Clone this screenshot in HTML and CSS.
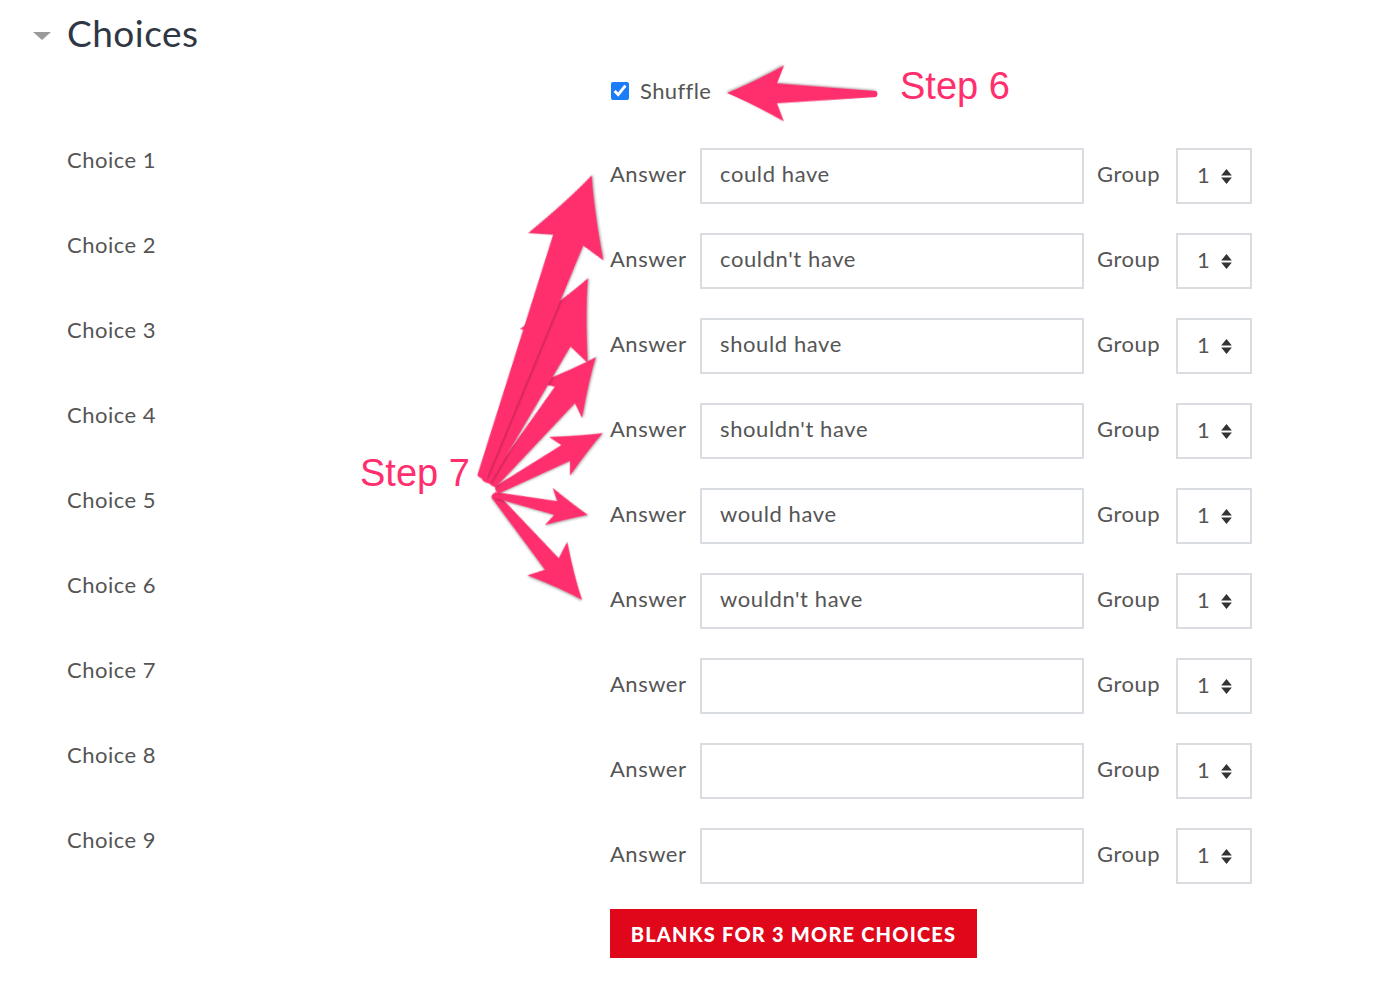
FILE: index.html
```html
<!DOCTYPE html>
<html lang="en">
<head>
  <meta charset="UTF-8">
  <meta name="viewport" content="width=device-width, initial-scale=1.0">
  <title>Choices</title>
  <link rel="stylesheet" href="styles.css">
</head>
<body>
  <fieldset class="section">
    <div class="legend">
      <span class="caret"></span>
      <h2>Choices</h2>
    </div>

    <div class="fitem shuffle-row">
      <div class="flabel"></div>
      <label class="check"><input type="checkbox" checked> Shuffle</label>
    </div>

    <div class="choices">
      <div class="fitem">
        <div class="flabel">Choice 1</div>
        <div class="fgroup">
          <span class="glabel">Answer</span>
          <input class="answer" type="text" value="could have">
          <span class="glabel">Group</span>
          <div class="select">1 <svg viewBox="0 0 10 14" width="11" height="15"><path d="M5 0L10 6H0Z M0 8H10L5 14Z"/></svg></div>
        </div>
      </div>
      <div class="fitem">
        <div class="flabel">Choice 2</div>
        <div class="fgroup">
          <span class="glabel">Answer</span>
          <input class="answer" type="text" value="couldn't have">
          <span class="glabel">Group</span>
          <div class="select">1 <svg viewBox="0 0 10 14" width="11" height="15"><path d="M5 0L10 6H0Z M0 8H10L5 14Z"/></svg></div>
        </div>
      </div>
      <div class="fitem">
        <div class="flabel">Choice 3</div>
        <div class="fgroup">
          <span class="glabel">Answer</span>
          <input class="answer" type="text" value="should have">
          <span class="glabel">Group</span>
          <div class="select">1 <svg viewBox="0 0 10 14" width="11" height="15"><path d="M5 0L10 6H0Z M0 8H10L5 14Z"/></svg></div>
        </div>
      </div>
      <div class="fitem">
        <div class="flabel">Choice 4</div>
        <div class="fgroup">
          <span class="glabel">Answer</span>
          <input class="answer" type="text" value="shouldn't have">
          <span class="glabel">Group</span>
          <div class="select">1 <svg viewBox="0 0 10 14" width="11" height="15"><path d="M5 0L10 6H0Z M0 8H10L5 14Z"/></svg></div>
        </div>
      </div>
      <div class="fitem">
        <div class="flabel">Choice 5</div>
        <div class="fgroup">
          <span class="glabel">Answer</span>
          <input class="answer" type="text" value="would have">
          <span class="glabel">Group</span>
          <div class="select">1 <svg viewBox="0 0 10 14" width="11" height="15"><path d="M5 0L10 6H0Z M0 8H10L5 14Z"/></svg></div>
        </div>
      </div>
      <div class="fitem">
        <div class="flabel">Choice 6</div>
        <div class="fgroup">
          <span class="glabel">Answer</span>
          <input class="answer" type="text" value="wouldn't have">
          <span class="glabel">Group</span>
          <div class="select">1 <svg viewBox="0 0 10 14" width="11" height="15"><path d="M5 0L10 6H0Z M0 8H10L5 14Z"/></svg></div>
        </div>
      </div>
      <div class="fitem">
        <div class="flabel">Choice 7</div>
        <div class="fgroup">
          <span class="glabel">Answer</span>
          <input class="answer" type="text" value="">
          <span class="glabel">Group</span>
          <div class="select">1 <svg viewBox="0 0 10 14" width="11" height="15"><path d="M5 0L10 6H0Z M0 8H10L5 14Z"/></svg></div>
        </div>
      </div>
      <div class="fitem">
        <div class="flabel">Choice 8</div>
        <div class="fgroup">
          <span class="glabel">Answer</span>
          <input class="answer" type="text" value="">
          <span class="glabel">Group</span>
          <div class="select">1 <svg viewBox="0 0 10 14" width="11" height="15"><path d="M5 0L10 6H0Z M0 8H10L5 14Z"/></svg></div>
        </div>
      </div>
      <div class="fitem">
        <div class="flabel">Choice 9</div>
        <div class="fgroup">
          <span class="glabel">Answer</span>
          <input class="answer" type="text" value="">
          <span class="glabel">Group</span>
          <div class="select">1 <svg viewBox="0 0 10 14" width="11" height="15"><path d="M5 0L10 6H0Z M0 8H10L5 14Z"/></svg></div>
        </div>
      </div>
    </div>

    <div class="fitem button-row">
      <div class="flabel"></div>
      <div><button type="button" class="btn-more">Blanks for 3 more choices</button></div>
    </div>
  </fieldset>

  <!-- annotation layer -->
  <svg class="annot" width="1384" height="983" viewBox="0 0 1384 983">
    <g class="arrows">
      <path transform="translate(876 94) rotate(180.4)" d="M0 -3 L99 -10 L92 -28 Q125 -9.8 149 0 Q125 9.8 92 28 L99 10 L0 3 Q-3 0 0 -3Z"/>
      <path transform="translate(494 495) rotate(50)" d="M0 -3.5 L90 -9 L83 -26 Q114.5 -8.75 137 0 Q114.5 8.75 83 26 L90 9 L0 3.5 Q-3 0 0 -3.5Z"/>
      <path transform="translate(495 495) rotate(12.1)" d="M0 -3 L62 -7 L55 -19 Q79 -6.7 95 0 Q79 6.7 55 19 L62 7 L0 3 Q-3 0 0 -3Z"/>
      <path transform="translate(497 490) rotate(-28.3)" d="M0 -4 L78 -9 L71 -22 Q100 -7.7 120 0 Q100 7.7 71 22 L78 9 L0 4 Q-3 0 0 -4Z"/>
      <path transform="translate(492 484) rotate(-50.7)" d="M0 -5 L115 -13 L108 -28 Q141 -9.5 164 0 Q141 9.5 108 28 L115 13 L0 5 Q-3 0 0 -5Z"/>
      <path transform="translate(486 481) rotate(-63.3)" d="M0 -5 L158 -15 L151 -38 Q195 -13 227 0 Q195 13 151 38 L158 15 L0 5 Q-3 0 0 -5Z"/>
      <path transform="translate(482 477) rotate(-70)" d="M0 -5 L252 -16 L245 -40 Q289 -14 321 0 Q289 14 245 40 L252 16 L0 5 Q-3 0 0 -5Z"/>
    </g>
  </svg>
  <div class="step step6">Step 6</div>
  <div class="step step7">Step 7</div>
</body>
</html>
```

FILE: styles.css
```css
body {
  margin: 0;
  font-family: Lato, "Open Sans", sans-serif;
  color: #555;
  background: #fff;
}
.section {
  border: none;
  margin: 0;
  padding: 10px 0 0 0;
}
.legend {
  display: flex;
  align-items: center;
  padding-left: 33px;
  height: 46px;
}
.caret {
  width: 0;
  height: 0;
  border-left: 9px solid transparent;
  border-right: 9px solid transparent;
  border-top: 8px solid #9a9a9a;
  margin: 6px 16px 0 0;
}
.legend h2 {
  margin: 0;
  font-size: 37px;
  font-weight: 400;
  color: #2f3744;
  letter-spacing: 0.5px;
  line-height: 46px;
}
.fitem {
  display: grid;
  grid-template-columns: 610px 1fr;
  align-items: start;
}
.flabel {
  padding-left: 67px;
  font-size: 22px;
  line-height: 24px;
  letter-spacing: 0.5px;
  color: #555;
}
.shuffle-row {
  margin-top: 20px;
}
.check {
  display: flex;
  align-items: center;
  gap: 11px;
  font-size: 22px;
  line-height: 30px;
  letter-spacing: 0.4px;
  color: #555;
}
.check input {
  width: 18px;
  height: 18px;
  margin: 0 0 0 1px;
  accent-color: #1a7cf7;
}
.choices {
  display: flex;
  flex-direction: column;
  gap: 29px;
  margin-top: 42px;
}
.fgroup {
  display: grid;
  grid-template-columns: 77px 384px 66px 76px;
  column-gap: 13px;
  align-items: center;
}
.glabel {
  font-size: 22px;
  letter-spacing: 0.5px;
  color: #555;
  white-space: nowrap;
  padding-bottom: 5px;
}
.answer {
  box-sizing: border-box;
  height: 56px;
  width: 384px;
  border: 2px solid #d9dde2;
  border-radius: 1px;
  padding: 0 18px 5px;
  font-family: Lato, "Open Sans", sans-serif;
  font-size: 22px;
  letter-spacing: 0.6px;
  color: #555;
  outline: none;
}
.select {
  box-sizing: border-box;
  height: 56px;
  border: 2px solid #d9dde2;
  display: flex;
  align-items: center;
  gap: 11px;
  padding: 0 0 3px 19px;
  font-size: 22px;
  color: #555;
}
.select svg {
  fill: #333;
  margin-top: 3px;
}
.button-row {
  margin-top: 25px;
}
.btn-more {
  background: #e0071b;
  color: #fff;
  border: none;
  height: 49px;
  width: 367px;
  padding: 0;
  font-family: Lato, "Open Sans", sans-serif;
  font-weight: 900;
  font-size: 20px;
  letter-spacing: 1.2px;
  text-transform: uppercase;
  cursor: pointer;
}
.annot {
  position: absolute;
  top: 0;
  left: 0;
  pointer-events: none;
}
.arrows path {
  fill: #ff2e6c;
  filter: drop-shadow(1px 1.5px 1px rgba(0, 0, 0, 0.3));
}
.step {
  position: absolute;
  font-family: "Liberation Sans", Arial, sans-serif;
  font-size: 38px;
  line-height: 38px;
  color: #ff2e6c;
}
.step6 {
  left: 900px;
  top: 67px;
}
.step7 {
  left: 360px;
  top: 454px;
}
```
